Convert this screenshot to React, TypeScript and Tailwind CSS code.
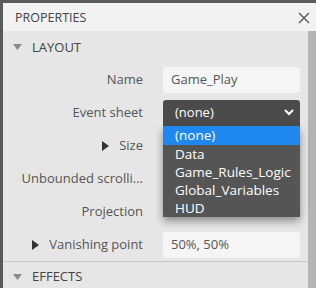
import { useState } from "react";

const font = { fontFamily: '"Open Sans", "Noto Sans", sans-serif' };

function Caret({ open }: { open: boolean }) {
  return open ? (
    <svg width="9" height="7" viewBox="0 0 9 7" className="shrink-0">
      <path d="M0 0 H9 L4.5 6 Z" fill="#8a8a8a" />
    </svg>
  ) : (
    <svg width="7" height="10" viewBox="0 0 7 10" className="shrink-0">
      <path d="M0 0 L7 5 L0 10 Z" fill="#333" />
    </svg>
  );
}

function Row({ label, caret, children }: { label: string; caret?: boolean; children?: React.ReactNode }) {
  return (
    <div className="flex h-[33px] items-center">
      <div className="flex w-[140px] shrink-0 items-center justify-end gap-[10px] text-[13px] text-[#555]">
        {caret && <Caret open={false} />}
        <span className="truncate">{label}</span>
      </div>
      <div className="ml-[20px] w-[137px]">{children}</div>
    </div>
  );
}

export default function App() {
  const [sheet] = useState("(none)");
  const options = ["(none)", "Data", "Game_Rules_Logic", "Global_Variables", "HUD"];

  return (
    <div className="h-[288px] w-[316px] overflow-hidden bg-[#5a5a5a] pl-[3px] pt-[3px]" style={font}>
      <div className="flex h-full flex-col bg-[#e6e6e6]">
        <div className="flex h-[28px] shrink-0 items-center justify-between bg-[#f2f2f2] pl-[12px] pr-[5px] pt-[2px] text-[12.5px] text-[#444]">
          <span>PROPERTIES</span>
          <svg width="14" height="14" viewBox="0 0 14 14">
            <path d="M2 2 L12 12 M12 2 L2 12" stroke="#555" strokeWidth="1.4" />
          </svg>
        </div>
        <div className="relative flex flex-1">
          <div className="flex-1">
            <div className="flex h-[28px] items-center gap-[10px] pl-[10px] pt-[5px] text-[13px] text-[#444]">
              <Caret open />
              <span>LAYOUT</span>
            </div>
            <div className="pt-[4px]">
              <Row label="Name">
                <div className="flex h-[26px] items-center rounded-[3px] bg-[#f5f5f5] pl-[8px] text-[13px] text-[#555]">Game_Play</div>
              </Row>
              <Row label="Event sheet">
                <div className="relative">
                  <div className="flex h-[26px] items-center justify-between rounded-t-[3px] bg-[#4b4b4b] pl-[12px] pr-[6px] text-[13px] text-white">
                    <span>{sheet}</span>
                    <svg width="10" height="7" viewBox="0 0 10 7">
                      <path d="M1 1 L5 5 L9 1" stroke="#fff" strokeWidth="2" fill="none" />
                    </svg>
                  </div>
                  <div className="absolute left-0 top-[26px] z-10 w-[137px] bg-[#555] text-[13.5px] leading-[18px] text-white shadow-[0_4px_8px_rgba(0,0,0,0.4)]">
                    {options.map((o, i) => (
                      <div key={o} className={i === 0 ? "h-[19px] bg-[#1e88f0] pl-[12px]" : "h-[18px] pl-[12px]"}>
                        {o}
                      </div>
                    ))}
                  </div>
                </div>
              </Row>
              <Row label="Size" caret />
              <Row label="Unbounded scrolli..." />
              <Row label="Projection">
                <div className="h-[26px]" />
              </Row>
              <Row label="Vanishing point" caret>
                <div className="flex h-[26px] items-center rounded-[3px] bg-[#f5f5f5] pl-[8px] text-[13px] text-[#555]">50%, 50%</div>
              </Row>
            </div>
            <div className="h-px bg-[#c8c8c8]" />
            <div className="flex h-[26px] items-center gap-[10px] pl-[10px] pt-[4px] text-[13px] text-[#444]">
              <Caret open />
              <span>EFFECTS</span>
            </div>
          </div>
          <div className="w-[8px] shrink-0 bg-[#b4b4b4]" />
        </div>
      </div>
    </div>
  );
}
